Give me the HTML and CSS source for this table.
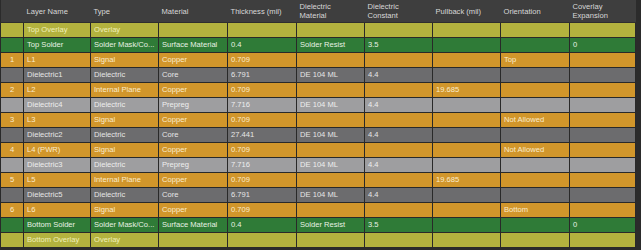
FILE: index.html
```html
<!DOCTYPE html>
<html>
<head>
<meta charset="utf-8">
<link rel="stylesheet" href="styles.css">
</head>
<body>
<div class="wrap">
<table class="stack">
<colgroup>
<col class="c-num"><col class="c-name"><col class="c-type"><col class="c-mat"><col class="c-thk"><col class="c-dm"><col class="c-dc"><col class="c-pb"><col class="c-or"><col class="c-cov">
</colgroup>
<thead>
<tr>
<th></th><th>Layer Name</th><th>Type</th><th>Material</th><th>Thickness (mil)</th><th>Dielectric<br>Material</th><th>Dielectric<br>Constant</th><th>Pullback (mil)</th><th>Orientation</th><th>Coverlay<br>Expansion</th>
</tr>
</thead>
<tbody>
<tr class="overlay"><td></td><td>Top Overlay</td><td>Overlay</td><td></td><td></td><td></td><td></td><td></td><td></td><td></td></tr>
<tr class="solder"><td></td><td>Top Solder</td><td>Solder Mask/Co...</td><td>Surface Material</td><td>0.4</td><td>Solder Resist</td><td>3.5</td><td></td><td></td><td>0</td></tr>
<tr class="copper"><td class="num">1</td><td>L1</td><td>Signal</td><td>Copper</td><td>0.709</td><td></td><td></td><td></td><td>Top</td><td></td></tr>
<tr class="core"><td></td><td>Dielectric1</td><td>Dielectric</td><td>Core</td><td>6.791</td><td>DE 104 ML</td><td>4.4</td><td></td><td></td><td></td></tr>
<tr class="copper"><td class="num">2</td><td>L2</td><td>Internal Plane</td><td>Copper</td><td>0.709</td><td></td><td></td><td>19.685</td><td></td><td></td></tr>
<tr class="prepreg"><td></td><td>Dielectric4</td><td>Dielectric</td><td>Prepreg</td><td>7.716</td><td>DE 104 ML</td><td>4.4</td><td></td><td></td><td></td></tr>
<tr class="copper"><td class="num">3</td><td>L3</td><td>Signal</td><td>Copper</td><td>0.709</td><td></td><td></td><td></td><td>Not Allowed</td><td></td></tr>
<tr class="core"><td></td><td>Dielectric2</td><td>Dielectric</td><td>Core</td><td>27.441</td><td>DE 104 ML</td><td>4.4</td><td></td><td></td><td></td></tr>
<tr class="copper"><td class="num">4</td><td>L4 (PWR)</td><td>Signal</td><td>Copper</td><td>0.709</td><td></td><td></td><td></td><td>Not Allowed</td><td></td></tr>
<tr class="prepreg"><td></td><td>Dielectric3</td><td>Dielectric</td><td>Prepreg</td><td>7.716</td><td>DE 104 ML</td><td>4.4</td><td></td><td></td><td></td></tr>
<tr class="copper"><td class="num">5</td><td>L5</td><td>Internal Plane</td><td>Copper</td><td>0.709</td><td></td><td></td><td>19.685</td><td></td><td></td></tr>
<tr class="core"><td></td><td>Dielectric5</td><td>Dielectric</td><td>Core</td><td>6.791</td><td>DE 104 ML</td><td>4.4</td><td></td><td></td><td></td></tr>
<tr class="copper"><td class="num">6</td><td>L6</td><td>Signal</td><td>Copper</td><td>0.709</td><td></td><td></td><td></td><td>Bottom</td><td></td></tr>
<tr class="solder"><td></td><td>Bottom Solder</td><td>Solder Mask/Co...</td><td>Surface Material</td><td>0.4</td><td>Solder Resist</td><td>3.5</td><td></td><td></td><td>0</td></tr>
<tr class="overlay"><td></td><td>Bottom Overlay</td><td>Overlay</td><td></td><td></td><td></td><td></td><td></td><td></td><td></td></tr>
</tbody>
</table>
</div>
</body>
</html>
```

FILE: styles.css
```css
html, body {
  margin: 0;
  padding: 0;
  background: #2b2b2b;
}
.wrap {
  width: 641px;
  height: 250px;
  overflow: hidden;
}
.stack {
  border-collapse: collapse;
  table-layout: fixed;
  width: 635px;
  font-family: "Liberation Sans", Arial, sans-serif;
  font-size: 7.6px;
}
.c-num { width: 23px; }
.c-name { width: 67px; }
.c-type { width: 68px; }
.c-mat { width: 69px; }
.c-thk { width: 69px; }
.c-dm { width: 68px; }
.c-dc { width: 68px; }
.c-pb { width: 68px; }
.c-or { width: 69px; }
.c-cov { width: 66px; }

.stack th {
  height: 22px;
  padding: 0 3px;
  background: #3e3e3e;
  color: #d8d8d8;
  font-weight: normal;
  text-align: left;
  line-height: 9px;
  vertical-align: middle;
  border-bottom: 1px solid #2e2e2e;
  white-space: nowrap;
}
.stack td {
  height: 14px;
  padding: 0 3px;
  line-height: 14px;
  white-space: nowrap;
  overflow: hidden;
  border: 1px solid rgba(40, 40, 40, 0.55);
  border-top: none;
}
.stack td.num { text-align: center; }

.overlay td { background: #b3b23e; color: #f0f0ba; }
.solder td { background: #2f7b37; color: #e8f2e4; }
.copper td { background: #d1962b; color: #faeccd; }
.core td { background: #6c6c6e; color: #e6e6e6; }
.prepreg td { background: #9e9ea0; color: #eeeeee; }
```
